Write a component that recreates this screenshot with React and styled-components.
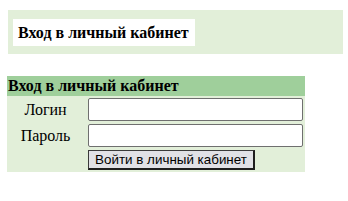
import React from 'react'
import styled, { createGlobalStyle } from 'styled-components'

const GlobalStyle = createGlobalStyle`
    html, body {
        margin: 0;
        padding: 0;
        background: #fff;
    }
    body {
        font-family: "Liberation Serif", "Times New Roman", serif;
        color: #000;
    }
`

function App() {
    return (
        <Page>
            <GlobalStyle />
            <Banner>
                <BannerTitle>Вход в личный кабинет</BannerTitle>
            </Banner>
            <LoginForm onSubmit={(e) => e.preventDefault()}>
                <FormHead>Вход в личный кабинет</FormHead>
                <FormBody>
                    <FieldLabel>Логин</FieldLabel>
                    <FieldInput type="text" />
                    <FieldLabel>Пароль</FieldLabel>
                    <FieldInput type="password" />
                    <span />
                    <SubmitRow>
                        <SubmitButton type="submit">Войти в личный кабинет</SubmitButton>
                    </SubmitRow>
                </FormBody>
            </LoginForm>
        </Page>
    )
}

const Page = styled.div`
    padding: 10px 0 0 7px;
`
const Banner = styled.div`
    margin-left: 1px;
    width: 335px;
    box-sizing: border-box;
    background-color: #e2efd9;
    padding: 9px 5px 8px;
    display: flex;
`
const BannerTitle = styled.h2`
    margin: 0;
    background-color: #fff;
    height: 27px;
    width: 182px;
    box-sizing: border-box;
    padding: 0 5px;
    display: flex;
    align-items: center;
    font-size: 16px;
    font-weight: bold;
`
const LoginForm = styled.form`
    margin-top: 22px;
    width: 298px;
    background-color: #e2efd9;
`
const FormHead = styled.div`
    background-color: #9fcf9b;
    height: 20px;
    line-height: 20px;
    padding-left: 1px;
    font-size: 16px;
    font-weight: bold;
`
const FormBody = styled.div`
    display: grid;
    grid-template-columns: 81px 215px;
    row-gap: 3px;
    padding: 2px 0 2px;
    align-items: center;
`
const FieldLabel = styled.label`
    text-align: center;
    font-size: 16px;
    padding-right: 4px;
    padding-top: 1px;
`
const FieldInput = styled.input`
    height: 23px;
    width: 215px;
    box-sizing: border-box;
    border: 1px solid #6f6f6f;
    border-radius: 2px;
    background: #fff;
    margin: 0;
`
const SubmitRow = styled.div`
    display: flex;
`
const SubmitButton = styled.button`
    height: 20px;
    width: 167px;
    box-sizing: border-box;
    margin: 0;
    padding: 0;
    white-space: nowrap;
    font-family: "Liberation Sans", Arial, sans-serif;
    font-size: 13.4px;
    color: #000;
    background-color: #e1e1e6;
    border-style: solid;
    border-color: #3a3a3a #1e1e1e #1e1e1e #3a3a3a;
    border-width: 1px 2px 2px 1px;
`

export default App
